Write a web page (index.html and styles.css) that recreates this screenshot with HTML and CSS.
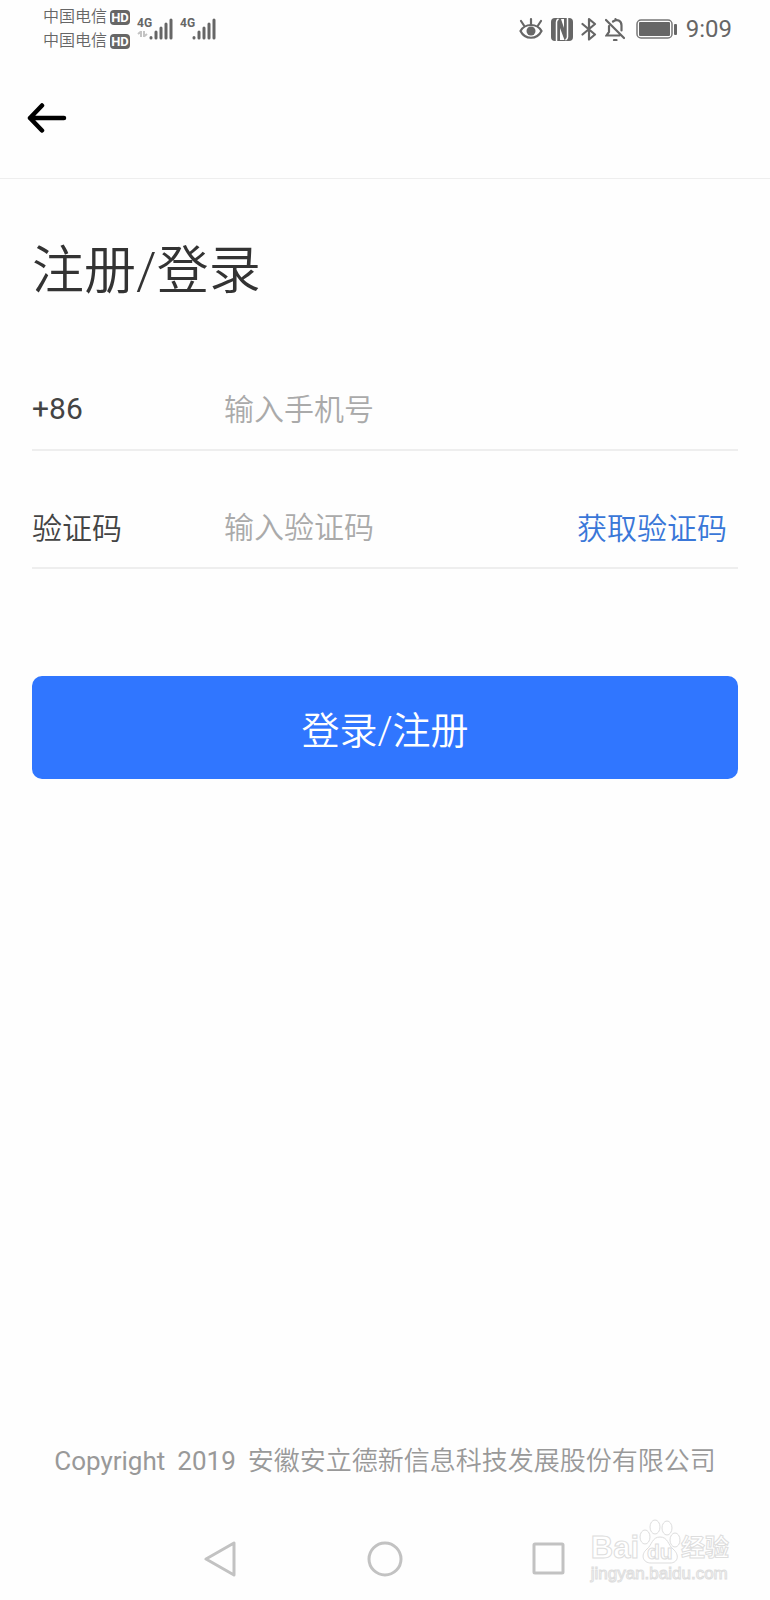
FILE: index.html
```
<!DOCTYPE html>
<html lang="zh-CN">
<head>
  <meta charset="UTF-8" />
  <meta name="viewport" content="width=device-width, initial-scale=1.0"/>
  <title>注册/登录</title>
  <link rel="stylesheet" href="styles.css">
</head>
<body>
  <div class="status-bar">
    <div class="carriers">
      <div class="carrier">中国电信<span class="hd">HD</span></div>
      <div class="carrier">中国电信<span class="hd">HD</span></div>
    </div>
    <div class="signals">
      <div class="signal">
        <span class="network">4G</span>
        <svg width="36" height="24" viewBox="0 0 36 24">
          <path d="M4 20v-6M1 17l3-2.500M7 14v6M10 17l-3 2.500" stroke="#c4c4c4" stroke-width="2" fill="none"/>
          <path d="M14 20.500v.5M19 15v6M24 11v10M29 7v14M34 3v18" stroke="#666" stroke-width="3" stroke-linecap="round"/>
        </svg>
      </div>
      <div class="signal">
        <span class="network">4G</span>
        <svg width="36" height="24" viewBox="0 0 36 24">
          <path d="M14 20.500v.5M19 15v6M24 11v10M29 7v14M34 3v18" stroke="#666" stroke-width="3" stroke-linecap="round"/>
        </svg>
      </div>
    </div>
    <div class="status-icons">
      <!-- eye comfort -->
      <svg width="24" height="24" viewBox="0 0 24 24" fill="none" stroke="#666" stroke-width="2.200" stroke-linecap="round">
        <path d="M1.500 14C6 6 18 6 22.500 14C18 23 6 23 1.500 14z"/>
        <path d="M2 4l3 4.500M12 2v5M22 4l-3 4.500"/>
        <circle cx="12" cy="14" r="4.500" fill="#666" stroke="none"/>
      </svg>
      <!-- nfc -->
      <svg width="22" height="24" viewBox="0 0 22 24">
        <rect y="1" width="22" height="23" rx="4" fill="#666"/>
        <path d="M5.500 24V5q0-2 2-3M16.500 1v19q0 2-2 3" fill="none" stroke="#fff" stroke-width="1.500"/>
        <path d="M10 2h3v9zM9 11l4.500 12H9z" fill="#fff"/>
      </svg>
      <!-- bluetooth -->
      <svg width="16" height="24" viewBox="0 0 16 24" fill="none" stroke="#666" stroke-width="2.200" stroke-linejoin="round" stroke-linecap="round">
        <path d="M1.500 7l12.500 10.500-6 5V2l6 5L1.500 17.500"/>
      </svg>
      <!-- muted bell -->
      <svg width="20" height="24" viewBox="0 0 20 24" fill="none" stroke="#666" stroke-width="2.200" stroke-linecap="round">
        <path d="M8 4.500c4-3 8.500-1 8.500 4v5M4 9v6l-2.500 3.500h13M10.500 3V2M1 3l18 18"/>
        <path d="M9 23h2.500"/>
      </svg>
      <!-- battery -->
      <svg class="battery" width="42" height="24" viewBox="0 0 42 24">
        <rect x="1" y="3" width="35" height="18" rx="4" fill="none" stroke="#777" stroke-width="1.500"/>
        <rect x="3" y="5" width="31" height="14" rx="1" fill="#666"/>
        <rect x="38" y="7" width="3" height="11" rx="1" fill="#666"/>
      </svg>
      <span class="time">9:09</span>
    </div>
  </div>

  <header class="header">
    <button class="back-btn" type="button" aria-label="返回">
      <svg width="40" height="32" viewBox="0 0 40 32" fill="none" stroke="#000" stroke-width="4.500" stroke-linecap="round" stroke-linejoin="round">
        <path d="M37 16H3M15 3.500L3 16l12 12.500"/>
      </svg>
    </button>
  </header>

  <main class="container">
    <h1>注册/登录</h1>
    <form>
      <div class="form-group">
        <label class="latin" for="phone">+86</label>
        <input type="tel" id="phone" placeholder="输入手机号" />
      </div>
      <div class="form-group">
        <label for="code">验证码</label>
        <input type="text" id="code" placeholder="输入验证码" />
        <button class="code-btn" type="button">获取验证码</button>
      </div>
      <button class="login-btn" type="button">登录/注册</button>
    </form>
  </main>

  <footer class="copyright">
    <span class="latin">Copyright</span>
    <span class="latin">2019</span>
    <span>安徽安立德新信息科技发展股份有限公司</span>
  </footer>

  <nav class="nav-bar">
    <button type="button" aria-label="后退">
      <svg width="36" height="36" viewBox="0 0 36 36"><path d="M31 2v32L3 18z"/></svg>
    </button>
    <button type="button" aria-label="主页">
      <svg width="36" height="36" viewBox="0 0 36 36"><circle cx="18" cy="18" r="16"/></svg>
    </button>
    <button type="button" aria-label="最近任务">
      <svg width="36" height="36" viewBox="0 0 36 36"><rect x="3" y="3" width="29" height="29" rx="1"/></svg>
    </button>
  </nav>

  <div class="watermark">
    <div class="brand">
      <span>Bai</span>
      <span class="paw">
        <svg width="42" height="46" viewBox="0 0 42 46" fill="#fff" stroke="#ddd">
          <ellipse cx="6" cy="19" rx="5" ry="7"/>
          <ellipse cx="16" cy="9" rx="5" ry="7"/>
          <ellipse cx="28" cy="10" rx="5" ry="7"/>
          <ellipse cx="36" cy="22" rx="5" ry="7"/>
          <path d="M21 19c-8 0-8 8-13 12-7 6-4 14 4 14h19c8 0 10-8 3-14-5-4-5-12-13-12z"/>
        </svg>
        <span class="du">du</span>
      </span>
      <span class="jingyan">经验</span>
    </div>
    <div class="site">jingyan.baidu.com</div>
  </div>
</body>
</html>
```

FILE: styles.css
```
* {
  box-sizing: border-box;
}
body {
  display: flex;
  flex-direction: column;
  min-height: 100vh;
  margin: 0;
  background-color: #fefefe;
  color: #333;
  font-family: Roboto, "Noto Sans CJK SC", sans-serif;
  font-weight: 350;
}
svg {
  display: block;
}
button, input {
  padding: 0;
  border: none;
  background: none;
  font-family: inherit;
  font-weight: inherit;
}
button {
  cursor: pointer;
}

/* status bar */
.status-bar {
  display: flex;
  align-items: center;
  height: 58px;
  padding: 0 38px 0 43px;
  color: #666;
}
.carrier {
  display: flex;
  align-items: center;
  gap: 3px;
  font-size: 16px;
  line-height: 24px;
}
.hd {
  width: 20px;
  border-radius: 4px;
  background-color: #666;
  color: #fff;
  font-size: 13px;
  font-weight: 700;
  line-height: 15px;
  text-align: center;
}
.signals {
  display: flex;
  gap: 7px;
  margin-left: 7px;
}
.signal {
  position: relative;
}
.network {
  position: absolute;
  top: 0;
  left: 0;
  font-size: 12px;
  font-weight: 700;
  line-height: 12px;
}
.status-icons {
  display: flex;
  align-items: center;
  gap: 8px;
  margin-left: auto;
}
.battery {
  margin-left: 3px;
}
.time {
  font-size: 24px;
  font-weight: 400;
  line-height: 28px;
}

/* header */
.header {
  display: flex;
  align-items: center;
  height: 121px;
  padding: 0 27px;
  border-bottom: 1px solid #eee;
}

/* form */
.container {
  flex: 1;
  padding: 53px 32px 0;
}
h1 {
  margin: 0 0 59px;
  font-size: 52px;
  font-weight: 350;
  line-height: 80px;
}
.form-group {
  display: flex;
  align-items: center;
  height: 80px;
  margin-bottom: 38px;
  border-bottom: 2px solid #eee;
  font-size: 30px;
}
.form-group label {
  width: 192px;
  padding-bottom: 4px;
  color: #444;
}
.form-group input {
  flex: 1;
  min-width: 0;
  padding-bottom: 2px;
  color: #333;
  font-size: 30px;
  outline: none;
}
.form-group input::placeholder {
  color: #aaa;
  opacity: 1;
}
.code-btn {
  padding: 0 11px 4px 0;
  color: #3a77d8;
  font-size: 30px;
}
.login-btn {
  width: 100%;
  height: 103px;
  margin-top: 69px;
  border-radius: 10px;
  background-color: #3076ff;
  color: #fff;
  font-size: 38px;
}

/* footer */
.copyright {
  display: flex;
  justify-content: center;
  gap: 12px;
  margin-bottom: 38px;
  color: #999;
  font-size: 26px;
  line-height: 38px;
  white-space: nowrap;
}
.latin {
  font-weight: 400;
}
.nav-bar {
  display: flex;
  height: 82px;
  padding: 0 18%;
}
.nav-bar button {
  display: flex;
  flex: 1;
  align-items: center;
  justify-content: center;
}
.nav-bar svg {
  fill: none;
  stroke: #c2c2c2;
  stroke-width: 3;
  stroke-linejoin: round;
}

/* watermark */
.watermark {
  position: absolute;
  right: 41px;
  bottom: 16px;
  color: #fff;
  font-family: "Liberation Sans", "Noto Sans CJK SC", sans-serif;
  font-weight: 700;
  -webkit-text-stroke: 1px #ddd;
}
.brand {
  display: flex;
  align-items: flex-end;
  font-size: 31px;
  line-height: 32px;
}
.paw {
  position: relative;
}
.du {
  position: absolute;
  bottom: 0;
  left: 8px;
  font-size: 21px;
  line-height: 24px;
}
.jingyan {
  font-size: 24px;
}
.site {
  font-size: 17px;
  font-weight: 400;
  line-height: 20px;
}
```
